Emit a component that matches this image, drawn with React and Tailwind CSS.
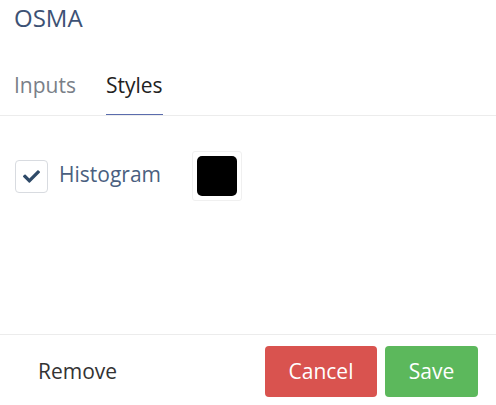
import React from "react";
import { FaCheck } from "react-icons/fa";

export default function App() {
  return (
    <div
      className="flex h-[405px] w-[496px] flex-col bg-white"
      style={{ fontFamily: '"Open Sans", "Noto Sans", sans-serif' }}
    >
      <div className="px-[14px] pt-[2px] text-[24px] leading-[32px] text-[#3d5275]">OSMA</div>
      <div className="mt-[37px] flex gap-[30px] border-b border-[#ececec] px-[14px]">
        <div className="pb-[16px] text-[21px] leading-[28px] text-[#7a7f88]">Inputs</div>
        <div className="border-b border-[#5a6cad] pb-[15px] text-[21px] leading-[28px] text-[#222]">Styles</div>
      </div>
      <div className="flex-1 px-[15px] pt-[35px]">
        <div className="flex items-center">
          <div className="flex h-[33px] w-[33px] items-center justify-center rounded-[4px] border border-[#d8dbe0] bg-white text-[#2f4a68]">
            <FaCheck size={17} />
          </div>
          <div className="mb-[4px] ml-[11px] text-[21px] leading-[28px] text-[#4a5f80]">Histogram</div>
          <div className="ml-[31px] flex h-[50px] w-[50px] items-center justify-center rounded-[3px] border border-[#f0f0f0] bg-white">
            <div className="h-[40px] w-[40px] rounded-[5px] bg-black" />
          </div>
        </div>
      </div>
      <div className="flex h-[71px] items-start justify-between border-t border-[#ececec] pl-[38px] pr-[18px] pt-[11px]">
        <div className="flex h-[51px] items-center text-[21px] text-[#333]">Remove</div>
        <div className="flex gap-[8px]">
          <button className="h-[51px] w-[112px] rounded-[4px] bg-[#d9534f] text-[21px] text-white">Cancel</button>
          <button className="h-[51px] w-[93px] rounded-[4px] bg-[#5cb85c] text-[21px] text-white">Save</button>
        </div>
      </div>
    </div>
  );
}
